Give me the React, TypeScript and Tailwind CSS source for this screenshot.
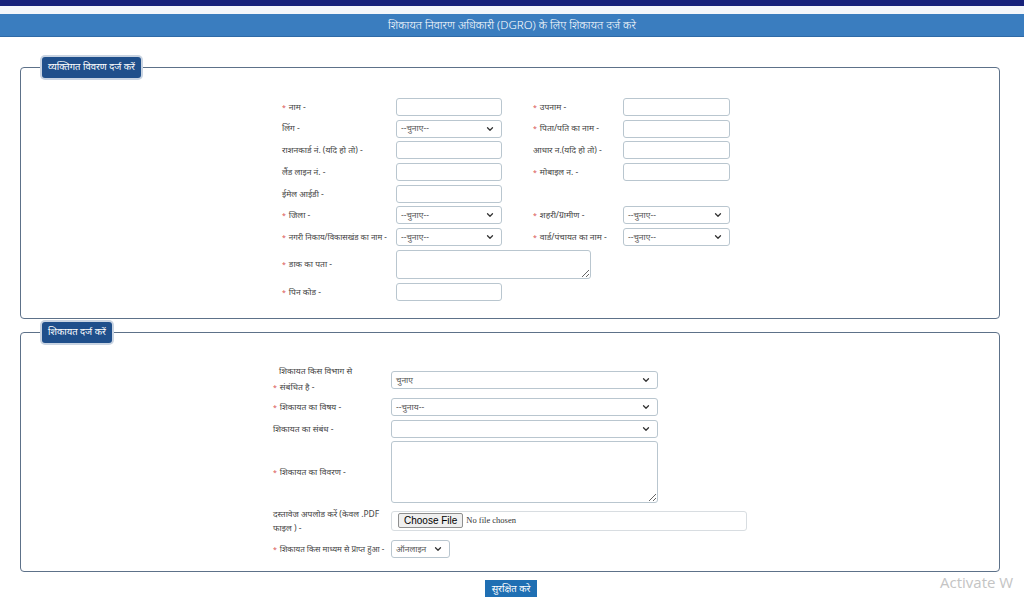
import React from "react";
import { ChevronDown } from "lucide-react";

const font = "font-['Noto_Sans','Noto_Sans_Devanagari','Lohit_Devanagari',sans-serif]";

const Star = () => <span className="text-[#d9534f] mr-[3px] text-[7px]">*</span>;

const Label = ({ text, req, w, size = "text-[8.5px]" }: { text: string; req?: boolean; w: string; size?: string }) => (
  <div className={`${w} shrink-0 ${size} text-[#444] leading-none whitespace-nowrap`}>
    {req && <Star />}
    {text}
  </div>
);

const Input = ({ w = "w-[106px]" }: { w?: string }) => (
  <input
    className={`${w} h-[18px] shrink-0 border border-[#b9c6cf] rounded-[3px] bg-white outline-none`}
  />
);

const Select = ({ w = "w-[106px]", h = "h-[18px]", value = "--चुनाए--" }: { w?: string; h?: string; value?: string }) => (
  <div
    className={`${w} ${h} shrink-0 border border-[#b9c6cf] rounded-[3px] bg-white flex items-center justify-between pl-[4px] pr-[6px]`}
  >
    <span className="text-[8.5px] text-[#555] leading-none">{value}</span>
    <ChevronDown size={10} strokeWidth={3} className="text-[#333]" />
  </div>
);

const Legend = ({ children }: { children: React.ReactNode }) => (
  <legend className="ml-[21px] px-0">
    <div className="h-[21px] px-[6px] flex items-center bg-[#1f4f8b] rounded-[3px] text-white text-[9.5px] shadow-[0_0_0_2px_#c9d4e2]">
      {children}
    </div>
  </legend>
);

export default function App() {
  return (
    <div className={`w-[1024px] h-[597px] bg-white overflow-hidden relative ${font}`}>
      <div className="h-[6px] bg-[#16217a]" />
      <div className="h-[8px] bg-[#f3f6fa]" />
      <div className="h-[23px] bg-[#3a7dbf] border-b border-[#2f6aa6] flex items-center justify-center text-white text-[11.5px] font-light">
        शिकायत निवारण अधिकारी (DGRO) के लिए शिकायत दर्ज करे
      </div>

      {/* व्यक्तिगत विवरण */}
      <fieldset className="mt-[20px] ml-[20px] w-[980px] border border-[#5d7189] rounded-[4px] pt-[20px] pb-[17px] px-0">
        <Legend>व्यक्तिगत विवरण दर्ज करें</Legend>
        <div className="ml-[261px] flex flex-col gap-y-[3.7px]">
          <div className="h-[18px] flex items-center">
            <Label req text="नाम -" w="w-[114px]" />
            <Input />
            <div className="w-[31px]" />
            <Label req text="उपनाम -" w="w-[90px]" />
            <Input w="w-[107px]" />
          </div>
          <div className="h-[18px] flex items-center">
            <Label text="लिंग -" w="w-[114px]" />
            <Select />
            <div className="w-[31px]" />
            <Label req text="पिता/पति का नाम -" w="w-[90px]" />
            <Input w="w-[107px]" />
          </div>
          <div className="h-[18px] flex items-center">
            <Label text="राशनकार्ड नं. (यदि हो तो) -" w="w-[114px]" />
            <Input />
            <div className="w-[31px]" />
            <Label text="आधार न.(यदि हो तो) -" w="w-[90px]" />
            <Input w="w-[107px]" />
          </div>
          <div className="h-[18px] flex items-center">
            <Label text="लैंड लाइन नं. -" w="w-[114px]" />
            <Input />
            <div className="w-[31px]" />
            <Label req text="मोबाइल न. -" w="w-[90px]" />
            <Input w="w-[107px]" />
          </div>
          <div className="h-[18px] flex items-center">
            <Label text="ईमेल आईडी -" w="w-[114px]" />
            <Input />
          </div>
          <div className="h-[18px] flex items-center">
            <Label req text="जिला -" w="w-[114px]" />
            <Select />
            <div className="w-[31px]" />
            <Label req text="शहरी/ग्रामीण -" w="w-[90px]" />
            <Select w="w-[107px]" />
          </div>
          <div className="h-[18px] flex items-center">
            <Label req text="नगरी निकाय/विकासखंड का नाम -" w="w-[114px]" size="text-[8px]" />
            <Select />
            <div className="w-[31px]" />
            <Label req text="वार्ड/पंचायत का नाम -" w="w-[90px]" />
            <Select w="w-[107px]" />
          </div>
          <div className="h-[29px] flex items-center">
            <Label req text="डाक का पता -" w="w-[114px]" />
            <textarea className="w-[195px] h-[29px] border border-[#b9c6cf] rounded-[3px] bg-white outline-none" />
          </div>
          <div className="h-[18px] flex items-center mt-[0.3px]">
            <Label req text="पिन कोड -" w="w-[114px]" />
            <Input />
          </div>
        </div>
      </fieldset>

      {/* शिकायत */}
      <fieldset className="mt-[3px] ml-[20px] w-[980px] border border-[#5d7189] rounded-[4px] pt-[21px] pb-[13px] px-0">
        <Legend>शिकायत दर्ज करें</Legend>
        <div className="ml-[252px] flex flex-col">
          <div className="h-[32px] flex items-center">
            <div className="w-[118px] shrink-0 text-[8.5px] text-[#444] leading-[16px]">
              <div className="pl-[6px]">शिकायत किस विभाग से</div>
              <div>
                <Star />
                संबंधित है -
              </div>
            </div>
            <Select w="w-[267px]" value="चुनाए" />
          </div>
          <div className="h-[20px] mt-[1px] flex items-center">
            <Label req text="शिकायत का विषय -" w="w-[118px]" />
            <Select w="w-[267px]" value="--चुनाय--" />
          </div>
          <div className="h-[20px] mt-[2px] flex items-center">
            <Label text="शिकायत का संबंध -" w="w-[118px]" />
            <Select w="w-[267px]" value="" />
          </div>
          <div className="h-[62px] mt-[2px] flex items-center">
            <Label req text="शिकायत का विवरण -" w="w-[118px]" />
            <textarea className="w-[267px] h-[62px] border border-[#b9c6cf] rounded-[3px] bg-white outline-none" />
          </div>
          <div className="h-[26px] mt-[5px] flex items-center">
            <div className="w-[118px] shrink-0 text-[8.5px] text-[#444] leading-[14px]">
              <div>दस्तावेज अपलोड करें (केवल .PDF</div>
              <div>फाइल ) -</div>
            </div>
            <div className="w-[356px] h-[20px] border border-[#d8dde1] rounded-[3px] bg-white flex items-center pl-[6px]">
              <span className="h-[15px] px-[5px] flex items-center border border-[#8f8f8f] rounded-[2px] bg-[#efefef] text-[10px] text-black font-['Liberation_Sans',sans-serif] leading-none">
                Choose File
              </span>
              <span className="ml-[3px] text-[8.5px] text-[#333] font-['Liberation_Serif',serif]">No file chosen</span>
            </div>
          </div>
          <div className="h-[18px] mt-[6px] flex items-center">
            <Label req text="शिकायत किस माध्यम से प्राप्त हुआ -" w="w-[118px]" size="text-[8px]" />
            <Select w="w-[59px]" value="ऑनलाइन" />
          </div>
        </div>
      </fieldset>

      <div className="mt-[8px] flex justify-center">
        <button className="h-[17px] w-[52px] bg-[#1f6fb3] text-white text-[9.5px] leading-none ml-[-2px]">
          सुरक्षित करे
        </button>
      </div>

      <div className="absolute left-[940px] top-[571px] text-[15px] text-[#c4c4c4] font-['Open_Sans',sans-serif] whitespace-nowrap">
        Activate W
      </div>
    </div>
  );
}
